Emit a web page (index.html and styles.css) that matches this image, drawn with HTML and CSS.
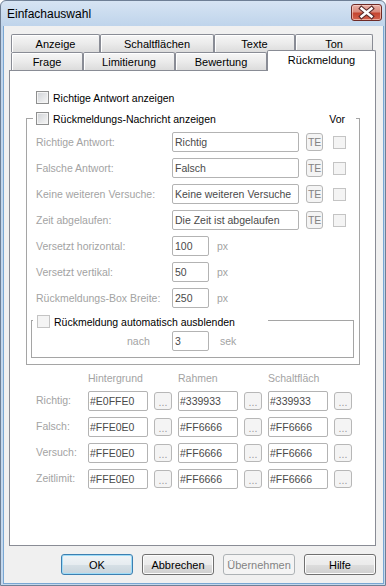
FILE: index.html
```html
<!DOCTYPE html>
<html lang="de">
<head>
  <meta charset="UTF-8">
  <title>Einfachauswahl</title>
  <link rel="stylesheet" href="styles.css">
</head>
<body>

<div class="window">
  <div class="titlebar">
    <span class="title">Einfachauswahl</span>
    <div class="close-btn">
      <svg width="29" height="15" viewBox="0 0 29 15">
        <path d="M9.5 3.5 L19.5 11.5 M19.5 3.5 L9.5 11.5" stroke="#5a2a2a" stroke-width="4.6" stroke-linecap="square"/>
        <path d="M9.5 3.5 L19.5 11.5 M19.5 3.5 L9.5 11.5" stroke="#ffffff" stroke-width="2.4" stroke-linecap="square"/>
      </svg>
    </div>
  </div>

  <div class="client">
    <!-- Reiter -->
    <div class="tabs">
      <div class="tabrow back">
        <div class="tab t-anzeige">Anzeige</div>
        <div class="tab t-schalt">Schaltflächen</div>
        <div class="tab t-texte">Texte</div>
        <div class="tab t-ton">Ton</div>
      </div>
      <div class="tabrow front">
        <div class="tab t-frage">Frage</div>
        <div class="tab t-limit">Limitierung</div>
        <div class="tab t-bewert">Bewertung</div>
        <div class="tab sel">Rückmeldung</div>
      </div>
    </div>

    <div class="panel">
      <div class="chk-line first">
        <div class="cb"></div><span>Richtige Antwort anzeigen</span>
      </div>

      <div class="group outer">
        <div class="legend">
          <div class="cb"></div><span>Rückmeldungs-Nachricht anzeigen</span>
          <span class="vor">Vor</span>
        </div>

        <div class="fields">
          <div class="field">
            <span class="lbl">Richtige Antwort:</span>
            <div class="txt">Richtig</div>
            <div class="te">TE</div>
            <div class="cb off"></div>
          </div>
          <div class="field">
            <span class="lbl">Falsche Antwort:</span>
            <div class="txt">Falsch</div>
            <div class="te">TE</div>
            <div class="cb off"></div>
          </div>
          <div class="field">
            <span class="lbl">Keine weiteren Versuche:</span>
            <div class="txt">Keine weiteren Versuche</div>
            <div class="te">TE</div>
            <div class="cb off"></div>
          </div>
          <div class="field">
            <span class="lbl">Zeit abgelaufen:</span>
            <div class="txt">Die Zeit ist abgelaufen</div>
            <div class="te">TE</div>
            <div class="cb off"></div>
          </div>
          <div class="field">
            <span class="lbl">Versetzt horizontal:</span>
            <div class="txt num">100</div>
            <span class="unit">px</span>
          </div>
          <div class="field">
            <span class="lbl">Versetzt vertikal:</span>
            <div class="txt num">50</div>
            <span class="unit">px</span>
          </div>
          <div class="field">
            <span class="lbl">Rückmeldungs-Box Breite:</span>
            <div class="txt num">250</div>
            <span class="unit">px</span>
          </div>
        </div>

        <div class="group inner">
          <div class="legend">
            <div class="cb off"></div><span>Rückmeldung automatisch ausblenden</span>
          </div>
          <div class="delay">
            <span class="lbl">nach</span>
            <div class="txt num">3</div>
            <span class="unit sek">sek</span>
          </div>
        </div>
      </div>

      <!-- Farben -->
      <div class="colors">
        <span></span>
        <span class="ch">Hintergrund</span>
        <span class="ch">Rahmen</span>
        <span class="ch">Schaltfläch</span>

        <span class="lbl">Richtig:</span>
        <div class="txt">#E0FFE0</div><div class="dots">...</div>
        <div class="txt">#339933</div><div class="dots">...</div>
        <div class="txt">#339933</div><div class="dots">...</div>

        <span class="lbl">Falsch:</span>
        <div class="txt">#FFE0E0</div><div class="dots">...</div>
        <div class="txt">#FF6666</div><div class="dots">...</div>
        <div class="txt">#FF6666</div><div class="dots">...</div>

        <span class="lbl">Versuch:</span>
        <div class="txt">#FFE0E0</div><div class="dots">...</div>
        <div class="txt">#FF6666</div><div class="dots">...</div>
        <div class="txt">#FF6666</div><div class="dots">...</div>

        <span class="lbl">Zeitlimit:</span>
        <div class="txt">#FFE0E0</div><div class="dots">...</div>
        <div class="txt">#FF6666</div><div class="dots">...</div>
        <div class="txt">#FF6666</div><div class="dots">...</div>
      </div>
    </div>

    <div class="buttons">
      <div class="btn default">OK</div>
      <div class="btn">Abbrechen</div>
      <div class="btn disabled">Übernehmen</div>
      <div class="btn">Hilfe</div>
    </div>
  </div>
</div>

</body>
</html>
```

FILE: styles.css
```css
body {
  margin: 0;
  font-family: "Liberation Sans", Arial, sans-serif;
  font-size: 10.5px;
  color: #000;
  background: #fff;
}
.window {
  width: 386px;
  height: 586px;
  box-sizing: border-box;
  border: 1px solid #6e7f95;
  border-radius: 6px 6px 0 0;
  background: linear-gradient(#d6e4f3, #bfd4eb 25px, #c4d8ed);
  display: flex;
  flex-direction: column;
}
.titlebar {
  height: 25px;
  flex: none;
  display: flex;
  justify-content: space-between;
  align-items: flex-start;
}
.title {
  font-size: 12px;
  margin: 6px 0 0 6px;
}
.close-btn {
  width: 31px;
  height: 17px;
  box-sizing: border-box;
  margin: 3px 3px 0 0;
  border: 1px solid #6f2a26;
  border-radius: 3px;
  background: linear-gradient(#e8b0a6, #d98a7c 45%, #c5452f 55%, #d3634f);
  box-shadow: inset 0 0 0 1px rgba(255, 220, 210, 0.6);
}
.close-btn svg {
  display: block;
}
.client {
  flex: 1;
  margin: 0 1px 1px 2px;
  border: 1px solid #79a7d3;
  border-top: none;
  background: #f0f0f0;
}

/* Reiter */
.tabs {
  margin: 8px 0 0 7px;
  font-size: 11px;
}
.tabrow {
  display: flex;
}
.tabrow.back {
  height: 18px;
}
.tabrow.front {
  height: 20px;
  margin-top: -2px;
  align-items: flex-end;
}
.tab {
  box-sizing: border-box;
  height: 18px;
  border: 1px solid #898c95;
  border-bottom: none;
  border-radius: 2px 2px 0 0;
  background: linear-gradient(#f6f6f6, #ebebeb 50%, #dcdcdc);
  box-shadow: inset 1px 1px 0 #fff;
  text-align: center;
  line-height: 18px;
  flex: none;
}
.t-anzeige { width: 89px; }
.t-schalt { width: 114px; }
.t-texte { width: 81px; }
.t-ton { width: 78px; }
.t-frage { width: 72px; }
.t-limit { width: 92px; }
.t-bewert { width: 92px; }
.tab.sel {
  width: 109px;
  height: 21px;
  margin-bottom: -1px;
  background: #fff;
  box-shadow: none;
  line-height: 18px;
  position: relative;
  z-index: 1;
}

.panel {
  margin-left: 5px;
  width: 367px;
  height: 476px;
  box-sizing: border-box;
  border: 1px solid #898c95;
  background: #fff;
}

/* Kontrollkästchen */
.cb {
  width: 13px;
  height: 13px;
  box-sizing: border-box;
  flex: none;
  border: 1px solid #8e8f8f;
  background: linear-gradient(135deg, #cfd2d6, #f7f7f7);
  box-shadow: inset 0 0 0 1px #f4f4f4;
}
.cb.off {
  border-color: #c4c4c4;
  background: #f4f4f4;
  box-shadow: none;
}
.chk-line {
  display: flex;
  align-items: center;
  height: 13px;
}
.chk-line span,
.legend span {
  margin-left: 4px;
}
.first {
  margin: 20px 0 0 26px;
}

/* Gruppen */
.group {
  box-sizing: border-box;
  border: 1px solid #a5a5a5;
}
.legend {
  display: flex;
  align-items: center;
  height: 13px;
  box-sizing: border-box;
  background: #fff;
}
.outer {
  margin: 14px 0 0 16px;
  width: 334px;
  padding-bottom: 6px;
}
.outer > .legend {
  margin: -7px 0 0 6px;
  width: 323px;
  padding-left: 3px;
}
.legend .vor {
  margin: 0 11px 0 auto;
}
.fields {
  margin-top: 7px;
  padding-left: 9px;
}
.field {
  display: flex;
  align-items: center;
  height: 20px;
  margin-bottom: 6px;
}
.lbl {
  color: #a3a3a3;
}
.field .lbl {
  width: 136px;
  flex: none;
}
.txt {
  box-sizing: border-box;
  width: 127px;
  height: 20px;
  flex: none;
  border: 1px solid #b3b3b3;
  border-radius: 2px;
  padding-left: 2px;
  background: #fff;
  color: #4a4a4a;
  display: flex;
  align-items: center;
  white-space: nowrap;
  overflow: hidden;
}
.txt.num {
  width: 37px;
}
.te {
  box-sizing: border-box;
  width: 17px;
  height: 18px;
  margin-left: 7px;
  border: 1px solid #b7b7b7;
  border-radius: 3px;
  background: #f4f4f4;
  color: #838383;
  display: flex;
  align-items: center;
  justify-content: center;
  letter-spacing: -0.3px;
}
.field .cb {
  margin-left: 10px;
}
.unit {
  margin-left: 8px;
  color: #a3a3a3;
}
.inner {
  margin: 12px 0 0 4px;
  width: 323px;
  padding-bottom: 6px;
}
.inner > .legend {
  margin: -6px 0 0 1px;
  width: 235px;
  padding-left: 4px;
}
.delay {
  display: flex;
  align-items: center;
  height: 20px;
  margin-top: 3px;
  padding-left: 95px;
}
.delay .lbl {
  width: 45px;
}
.unit.sek {
  margin-left: 11px;
}

/* Farbtabelle */
.colors {
  margin: 7px 0 0 26px;
  display: grid;
  grid-template-columns: 46px 60px 18px 60px 18px 60px 18px;
  grid-auto-rows: 20px;
  grid-template-rows: 13px;
  column-gap: 6px;
  row-gap: 6px;
  align-items: center;
}
.colors .ch {
  grid-column: span 2;
  color: #a3a3a3;
  line-height: 13px;
}
.colors .lbl {
  margin-top: -3px;
}
.colors .txt {
  width: 60px;
  padding-left: 1px;
}
.dots {
  box-sizing: border-box;
  height: 18px;
  border: 1px solid #b7b7b7;
  border-radius: 3px;
  background: #f4f4f4;
  color: #9a9a9a;
  text-align: center;
  line-height: 18px;
}

/* Schaltflächen unten */
.buttons {
  display: flex;
  justify-content: flex-end;
  gap: 9px;
  margin-top: 8px;
  padding-right: 7px;
  font-size: 11px;
}
.btn {
  box-sizing: border-box;
  width: 72px;
  height: 21px;
  border: 1px solid #707070;
  border-radius: 3px;
  background: linear-gradient(#f2f2f2, #ebebeb 50%, #dddddd 51%, #cfcfcf);
  box-shadow: inset 0 0 0 1px #fcfcfc;
  display: flex;
  align-items: center;
  justify-content: center;
}
.btn.default {
  border-color: #3c7fb1;
  box-shadow: inset 0 0 0 1px #9fdcf7;
  background: linear-gradient(#f0f4f7, #e6ecf0 50%, #d6e0e6 51%, #c8d4dc);
}
.btn.disabled {
  border-color: #adb2b5;
  background: #f4f4f4;
  box-shadow: none;
  color: #838383;
}
```
